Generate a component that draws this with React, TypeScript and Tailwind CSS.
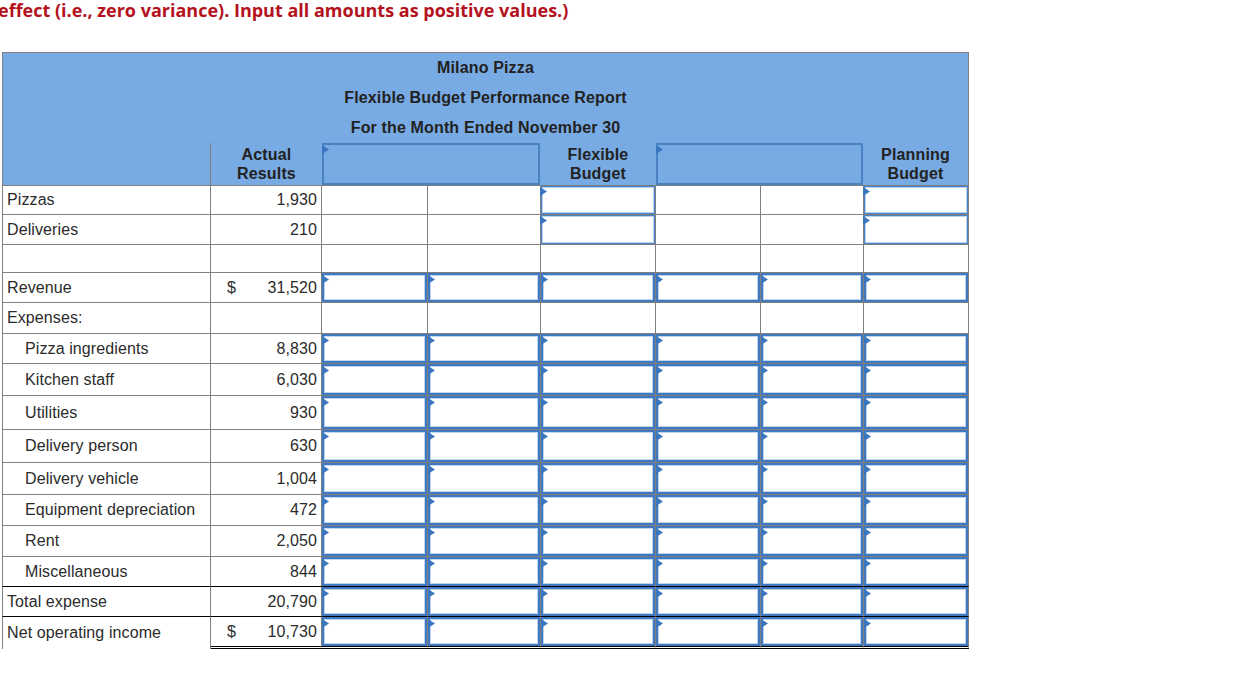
import React from "react";

const W = [
  "w-[209px]",
  "w-[111px]",
  "w-[106px]",
  "w-[113px]",
  "w-[115px]",
  "w-[105px]",
  "w-[103px]",
  "w-[105px]",
];

type RowDef = {
  label: string;
  indent?: boolean;
  dollar?: boolean;
  value?: string;
  inputs: "all" | "fb" | "none";
  h: string;
  line?: "gray" | "black" | "double";
};

const rows: RowDef[] = [
  { label: "Pizzas", value: "1,930", inputs: "fb", h: "h-[29px]" },
  { label: "Deliveries", value: "210", inputs: "fb", h: "h-[30px]" },
  { label: "", inputs: "none", h: "h-[28px]" },
  { label: "Revenue", dollar: true, value: "31,520", inputs: "all", h: "h-[30px]" },
  { label: "Expenses:", inputs: "none", h: "h-[31px]" },
  { label: "Pizza ingredients", indent: true, value: "8,830", inputs: "all", h: "h-[30px]" },
  { label: "Kitchen staff", indent: true, value: "6,030", inputs: "all", h: "h-[32px]" },
  { label: "Utilities", indent: true, value: "930", inputs: "all", h: "h-[34px]" },
  { label: "Delivery person", indent: true, value: "630", inputs: "all", h: "h-[33px]" },
  { label: "Delivery vehicle", indent: true, value: "1,004", inputs: "all", h: "h-[32px]" },
  { label: "Equipment depreciation", indent: true, value: "472", inputs: "all", h: "h-[31px]" },
  { label: "Rent", indent: true, value: "2,050", inputs: "all", h: "h-[31px]" },
  { label: "Miscellaneous", indent: true, value: "844", inputs: "all", h: "h-[30px]", line: "black" },
  { label: "Total expense", value: "20,790", inputs: "all", h: "h-[30px]", line: "black" },
  { label: "Net operating income", dollar: true, value: "10,730", inputs: "all", h: "h-[32px]", line: "double" },
];

function Flag() {
  return (
    <svg
      className="absolute left-[-2px] top-0"
      width="8"
      height="10"
      viewBox="0 0 8 10"
    >
      <polygon points="0,0 7,4.5 0,9" fill="#3b76c0" />
    </svg>
  );
}

function InputBox({ light }: { light?: boolean }) {
  return (
    <div
      className={
        light
          ? "relative h-full w-full border border-[#4a82c6] shadow-[inset_0_0_0_1px_#bcd3ef]"
          : "relative h-full w-full border-2 border-[#4079c0] shadow-[inset_0_0_0_1px_#bdd4f0]"
      }
    >
      <Flag />
    </div>
  );
}

function Row({ r }: { r: RowDef }) {
  const bottom = (i: number) => {
    if (r.line === "double") {
      return i === 0 ? "" : "border-b-[3px] border-double border-b-black";
    }
    if (r.line === "black") return "border-b border-b-black";
    return "border-b border-b-[#7f7f7f]";
  };
  return (
    <div className={`flex ${r.h}`}>
      <div
        className={`${W[0]} ${bottom(0)} flex items-center border-l border-r border-l-[#7f7f7f] border-r-[#7f7f7f] ${
          r.indent ? "pl-[22px]" : "pl-[4px]"
        }`}
      >
        {r.label}
      </div>
      <div
        className={`${W[1]} ${bottom(1)} flex items-center justify-between border-r border-r-[#7f7f7f] pr-[4px] pl-[16px]`}
      >
        <span>{r.dollar ? "$" : ""}</span>
        <span>{r.value ?? ""}</span>
      </div>
      {[2, 3, 4, 5, 6, 7].map((i) => {
        const has =
          r.inputs === "all" || (r.inputs === "fb" && (i === 4 || i === 7));
        return (
          <div
            key={i}
            className={`${W[i]} ${bottom(i)} border-r border-r-[#7f7f7f]`}
          >
            {has ? <InputBox light={r.inputs === "fb"} /> : null}
          </div>
        );
      })}
    </div>
  );
}

export default function App() {
  return (
    <div
      className="min-h-[673px] w-[1237px] bg-white text-[16px] text-[#2b2b2b]"
      style={{ fontFamily: '"Liberation Sans", Arial, sans-serif' }}
    >
      <div
        className="ml-[-2px] h-[22px] text-[18px] leading-[21px] font-bold text-[#b4121d]"
        style={{ fontFamily: '"Open Sans", Lato, sans-serif' }}
      >
        effect (i.e., zero variance). Input all amounts as positive values.)
      </div>
      <div className="ml-[2px] mt-[30px] w-[967px] tracking-[0.1px]">
        <div className="h-[134px] border border-[#7f7f7f] bg-[#78aae3] font-bold tracking-[0.15px] text-[#222]">
          <div className="flex h-[90px] flex-col items-center">
            <div className="h-[30px] leading-[30px]">Milano Pizza</div>
            <div className="h-[30px] leading-[30px]">
              Flexible Budget Performance Report
            </div>
            <div className="h-[30px] leading-[30px]">
              For the Month Ended November 30
            </div>
          </div>
          <div className="flex h-[42px]">
            <div className="w-[207px]" />
            <div className="flex w-[112px] flex-col items-center justify-center border-l border-l-[#7f7f7f] leading-[19px]">
              <span>Actual</span>
              <span>Results</span>
            </div>
            <div className="relative w-[218px] border-2 border-[#4a80c4]">
              <Flag />
            </div>
            <div className="flex w-[116px] flex-col items-center justify-center leading-[19px]">
              <span>Flexible</span>
              <span>Budget</span>
            </div>
            <div className="relative w-[207px] border-2 border-[#4a80c4]">
              <Flag />
            </div>
            <div className="flex w-[105px] flex-col items-center justify-center leading-[19px]">
              <span>Planning</span>
              <span>Budget</span>
            </div>
          </div>
        </div>
        {rows.map((r, i) => (
          <Row key={i} r={r} />
        ))}
      </div>
    </div>
  );
}
